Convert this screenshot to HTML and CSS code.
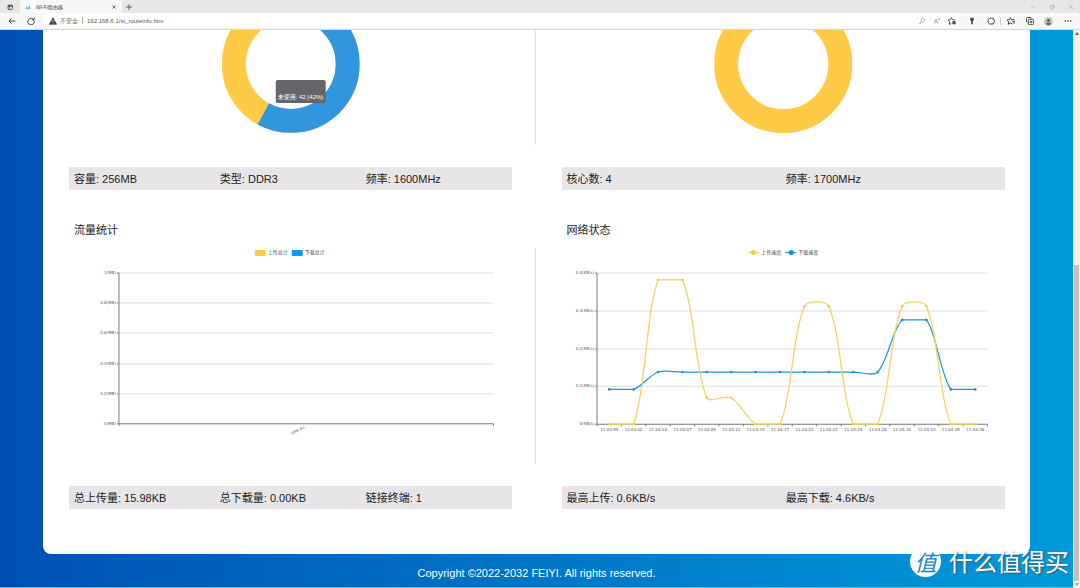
FILE: index.html
```html
<!DOCTYPE html>
<html lang="zh-CN">
<head>
<meta charset="utf-8">
<title>Wi-Fi路由器</title>
<link rel="stylesheet" href="styles.css">
</head>
<body>
<header class="browser">
  <div class="tabbar">
    <button class="tab-menu" aria-label="标签页操作"><svg class="icon" viewBox="0 0 12 12"><rect x="2" y="2" width="9" height="9" rx="1.5"/><path d="M2 3.500h9M2 5h9M4.500 5v6"/></svg></button>
    <div class="tab">
      <svg class="icon favicon" viewBox="0 0 12 12"><path d="M1 9.500h10M2 7.500h8M9 7V3M4 7V5.500"/></svg>
      <span class="tab-title">Wi-Fi路由器</span>
      <button class="tab-close" aria-label="关闭标签页"><svg class="icon" viewBox="0 0 12 12"><path d="M3 3l6 6M9 3l-6 6"/></svg></button>
    </div>
    <button class="tab-new" aria-label="新建标签页"><svg class="icon" viewBox="0 0 12 12"><path d="M6 0v12M0 6h12"/></svg></button>
    <div class="window-controls">
      <button class="window-button" aria-label="最小化"><svg class="icon" viewBox="0 0 12 12"><path d="M2 6h8"/></svg></button>
      <button class="window-button" aria-label="还原"><svg class="icon" viewBox="0 0 12 12"><rect x="2" y="4" width="6.500" height="6.500" rx="1"/><path d="M4 2h5q1.500 0 1.500 1.500V8"/></svg></button>
      <button class="window-button" aria-label="关闭"><svg class="icon" viewBox="0 0 12 12"><path d="M2 2l8 8M10 2l-8 8"/></svg></button>
    </div>
  </div>
  <div class="toolbar">
    <div class="nav">
      <button class="tool" aria-label="返回"><svg class="icon icon-large" viewBox="0 0 12 12"><path d="M11 6H1.500M5.500 2L1.500 6l4 4"/></svg></button>
      <button class="tool" aria-label="刷新"><svg class="icon icon-large" viewBox="0 0 12 12"><path d="M10.500 4.500A4.900 4.900 0 1 0 11 6M10.700 1v3.500H7.200"/></svg></button>
    </div>
    <div class="address">
      <svg class="icon icon-large warning" viewBox="0 0 12 12"><path d="M6 1L11.500 11H.5z"/><path class="warning-mark" d="M6 4.500v3M6 8.800v1"/></svg>
      <label class="security" for="url">不安全</label>
      <span class="separator"></span>
      <input class="url" id="url" type="text" value="192.168.6.1/st_routeinfo.htm">
      <button class="field-tool" aria-label="密码"><svg class="icon" viewBox="0 0 12 12"><circle cx="7.500" cy="4.500" r="3.500"/><path d="M5 7l-4 4h2.500"/></svg></button>
      <button class="field-tool" aria-label="朗读"><svg class="icon" viewBox="0 0 12 12"><path d="M0 11L4 2l4 9M1.500 8h5M8.500 1q1.500 1.500 0 3M10.500 0q2.500 2.500 0 5"/></svg></button>
      <button class="field-tool field-tool-strong" aria-label="添加收藏"><svg class="icon icon-large" viewBox="0 0 12 12"><path d="M5 10l-3 1 .5-4L0 4.500 3.500 4 5 1l1.700 3 3.800.5"/><circle class="solid" cx="9" cy="8.500" r="2.800"/></svg></button>
    </div>
    <div class="actions">
      <button class="tool" aria-label="密钥"><svg class="icon icon-large" viewBox="0 0 12 12"><path class="solid" d="M4 1h4l1 2-1 2.500H7.200V11H4.800V5.500H4L3 3z"/></svg></button>
      <button class="tool" aria-label="扩展"><svg class="icon icon-large" viewBox="0 0 12 12"><path d="M9.500 4V2H6.500A1.500 1.500 0 0 0 4 2.500Q1 3 1.500 6.500T4 10.500h5.500V8.500a2 2 0 1 0 0-4.500z"/></svg></button>
      <span class="separator"></span>
      <button class="tool" aria-label="收藏夹"><svg class="icon icon-large" viewBox="0 0 12 12"><path d="M8 10.500L5 9l-3 2 .5-4L0 4.500 3.500 4 5 1l1.700 3L11 4M8.500 6.500H12M9 9h3"/></svg></button>
      <button class="tool" aria-label="集锦"><svg class="icon icon-large" viewBox="0 0 12 12"><rect x="3.500" y="3.500" width="8" height="8" rx="1.500"/><path d="M2 8.500Q.7 8 .7 6V2Q.7.700 2 .7h4q2 0 2.500 1.300M7.500 5.500v4M5.500 7.500h4"/></svg></button>
      <button class="tool" aria-label="个人资料"><svg class="avatar" viewBox="0 0 12 12"><circle class="avatar-disc" cx="6" cy="6" r="6"/><circle class="avatar-person" cx="6" cy="4.500" r="2.200"/><path class="avatar-person" d="M2.500 7.500h7Q9 11 6 11T2.500 7.500z"/></svg></button>
      <button class="tool" aria-label="设置及其他"><svg class="icon icon-large" viewBox="0 0 12 12"><path class="solid" d="M1 5h2v2H1zM5 5h2v2H5zM9 5h2v2H9z"/></svg></button>
    </div>
  </div>
</header>

<div class="viewport">
  <div class="page">
    <main class="card">
      <section class="panel panel-divided">
        <div class="chart chart-donut">
          <svg class="plot" viewBox="0 0 443 115" role="img" aria-label="内存使用">
            <circle class="ring" cx="222" cy="34" r="57"/>
            <circle class="ring ring-blue" cx="222" cy="34" r="57" pathLength="100" stroke-dasharray="58 42" transform="rotate(-90 222 34)"/>
            <rect class="tip" x="207" y="50" width="50" height="23" rx="2"/>
            <text class="tip-text" x="209" y="69">未使用: 42 (42%)</text>
          </svg>
        </div>
        <ul class="facts"><li>容量: 256MB</li><li>类型: DDR3</li><li>频率: 1600MHz</li></ul>
      </section>
      <section class="panel">
        <div class="chart chart-donut">
          <svg class="plot" viewBox="0 0 443 115" role="img" aria-label="处理器使用">
            <circle class="ring" cx="221" cy="34" r="57"/>
          </svg>
        </div>
        <ul class="facts"><li>核心数: 4</li><li>频率: 1700MHz</li></ul>
      </section>
      <section class="panel panel-divided">
        <h2 class="heading">流量统计</h2>
        <div class="chart">
          <svg class="plot" id="traffic" viewBox="0 0 443 216" role="img" aria-label="流量统计">
            <rect class="bar-yellow" x="186" y="2" width="11" height="6" rx="1"/>
            <text class="legend" x="199" y="6">上传总计</text>
            <rect class="bar-blue" x="223" y="2" width="11" height="6" rx="1"/>
            <text class="legend" x="236" y="6">下载总计</text>
          </svg>
        </div>
        <ul class="facts"><li>总上传量: 15.98KB</li><li>总下载量: 0.00KB</li><li>链接终端: 1</li></ul>
      </section>
      <section class="panel">
        <h2 class="heading">网络状态</h2>
        <div class="chart">
          <svg class="plot" id="network" viewBox="0 0 443 216" role="img" aria-label="网络状态">
            <path class="line-up" d="M186 4.500h11"/><circle class="dot-up" cx="191" cy="4.500" r="2.500"/>
            <text class="legend" x="199" y="6">上传速度</text>
            <path class="line-down" d="M223 4.500h11"/><circle class="dot-down" cx="229" cy="4.500" r="2.500"/>
            <text class="legend" x="236" y="6">下载速度</text>
          </svg>
        </div>
        <ul class="facts"><li>最高上传: 0.6KB/s</li><li>最高下载: 4.6KB/s</li></ul>
      </section>
    </main>
    <footer class="footer">Copyright ©2022-2032 FEIYI. All rights reserved.</footer>
  </div>
  <div class="scrollbar" aria-hidden="true">
    <span class="arrow arrow-up"></span>
    <span class="thumb"></span>
    <span class="arrow arrow-down"></span>
  </div>
</div>

<div class="watermark">
  <span class="watermark-badge">值</span>
  <span class="watermark-name">什么值得买</span>
</div>
<script src="charts.js"></script>
</body>
</html>
```

FILE: styles.css
```css
* { box-sizing: border-box; }

body {
  margin: 0;
  min-height: 100vh;
  display: flex;
  flex-direction: column;
  position: relative;
  background: #fff;
  color: #1c1c1e;
  font-family: "Liberation Sans", "Noto Sans CJK SC", sans-serif;
  font-size: 11px;
  line-height: 16px;
}

button {
  display: flex;
  align-items: center;
  justify-content: center;
  margin: 0;
  padding: 0;
  border: 0;
  background: none;
  color: inherit;
}

/* Browser frame */
.browser {
  color: #444;
  font-size: 6px;
  line-height: 8px;
  border-bottom: 1px solid #d6d6d6;
}
.tabbar { display: flex; height: 13px; background: #e6e8e6; }
.tab-menu { width: 20px; }
.tab {
  display: flex;
  align-items: center;
  gap: 5px;
  width: 102px;
  padding: 0 4px 0 5px;
  background: #f8f8f8;
  border-radius: 3px 3px 0 0;
}
.tab-title { flex: 1; font-size: 5px; }
.tab-close { width: 8px; height: 8px; }
.tab-new { width: 13px; }
.window-controls { display: flex; margin-left: auto; color: #b4b4b4; }
.window-button { width: 19px; }
.toolbar { display: flex; height: 16px; padding-right: 3px; background: #f8f8f8; }
.nav { display: flex; width: 43px; padding-left: 2px; }
.tool { width: 19px; }
.address {
  flex: 1;
  display: flex;
  align-items: center;
  height: 15px;
  padding: 0 0 0 6px;
  background: #fff;
  border-radius: 4px;
}
.security { margin-left: 3px; color: #777; }
.separator { flex: none; width: 1px; height: 7px; margin: 0 4px; background: #aaa; }
.url {
  flex: 1;
  min-width: 0;
  margin: 0;
  padding: 0;
  border: 0;
  outline: 0;
  background: none;
  color: #555;
  font: inherit;
}
.field-tool { width: 15px; height: 14px; color: #999; }
.field-tool-strong { color: #555; }
.actions { display: flex; align-items: center; padding-left: 3px; }
.actions .separator { margin: 0; background: #ccc; }

.icon {
  flex: none;
  width: 6px;
  height: 6px;
  fill: none;
  stroke: currentColor;
  stroke-width: 1.5;
}
.icon-large { width: 8px; height: 8px; }
.favicon { stroke: #3f9fd8; }
.solid { fill: currentColor; stroke: none; }
.warning { fill: #444; stroke-width: 1; }
.warning-mark { stroke: #fff; }
.avatar { width: 9px; height: 9px; }
.avatar-disc { fill: #c8c8c8; }
.avatar-person { fill: #666; }

/* Router page */
.viewport { flex: 1; display: flex; }
.page {
  flex: 1;
  display: flex;
  flex-direction: column;
  padding: 0 43px;
  background: linear-gradient(90deg, #0050b3, #009adb);
  border-bottom: 1px solid #6db2e0;
}
.card {
  display: grid;
  grid-template-columns: 1fr 1fr;
  row-gap: 32px;
  padding-bottom: 45px;
  background: #fff;
  border-radius: 0 0 8px 8px;
}
.panel { min-width: 0; padding: 0 25px; }
.panel-divided { padding-left: 26px; }
.panel-divided .chart {
  margin-right: -24px;
  padding-right: 23px;
  border-right: 1px solid #e2e2e4;
}
.chart { margin-top: 10px; margin-bottom: 22px; }
.chart-donut { margin-top: 0; }
.heading { margin: 0; padding-left: 5px; font-size: 11px; font-weight: 400; }
.facts {
  display: flex;
  margin: 0;
  padding: 4px 0 3px 5px;
  background: #e7e5e8;
  list-style: none;
}
.facts li { flex: 1; }
.footer { padding: 11px 0 6px; color: #fff; text-align: center; }

/* Charts */
.plot { display: block; width: 100%; height: auto; }
.bar-yellow { fill: #ffcb46; }
.bar-blue { fill: #0d96f2; }
.ring { fill: none; stroke: #ffcb46; stroke-width: 24; }
.ring-blue { stroke: #3196dd; }
.tip { fill: #67656a; }
.tip-text { fill: #fff; font-size: 6px; }
.legend { fill: #444; font-size: 5px; }
.grid-line { fill: none; stroke: #dedde3; }
.axis { fill: none; stroke: #77787c; }
.tick-label {
  fill: #555;
  font-family: "DejaVu Sans", sans-serif;
  font-size: 4px;
}
.label-end { text-anchor: end; }
.label-middle { text-anchor: middle; }
.line-up { fill: none; stroke: #f2d35f; stroke-width: 1.3; }
.line-down { fill: none; stroke: #1d95d8; stroke-width: 1.2; }
.dot-up { fill: #f5cb45; }
.dot-down { fill: #1590da; }

/* Scrollbar */
.scrollbar {
  display: flex;
  flex-direction: column;
  align-items: center;
  width: 7px;
  padding: 2px 0;
  background: #f2f2f2;
}
.arrow { border: 2px solid transparent; }
.arrow-up { border-top: 0; border-bottom: 3px solid #666; }
.arrow-down { border-bottom: 0; border-top: 3px solid #999; }
.thumb { width: 5px; height: 57%; margin: auto 0 2px; background: #c1c1c1; }

/* Watermark */
.watermark {
  position: absolute;
  right: 11px;
  bottom: 10px;
  display: flex;
  align-items: center;
  gap: 8px;
  color: #fff;
  font-family: "Noto Sans CJK SC", sans-serif;
  font-size: 24px;
  font-weight: 400;
  line-height: 34px;
}
.watermark-badge {
  width: 31px;
  height: 31px;
  border-radius: 50%;
  background: #fff;
  color: #1486c8;
  font-size: 22px;
  font-style: italic;
  line-height: 30px;
  text-align: center;
}
.watermark-name { text-shadow: 1px 1px 2px #456; }
```

FILE: charts.js
```javascript
const SVG = "http://www.w3.org/2000/svg";
const TOP = 25;
const BOTTOM = 176;
const RIGHT = 425;

function add(svg, tag, attrs, text) {
  const node = document.createElementNS(SVG, tag);
  for (const key in attrs) node.setAttribute(key, attrs[key]);
  if (text) node.textContent = text;
  svg.appendChild(node);
}

function drawAxes(svg, left, labels, columns) {
  const step = (BOTTOM - TOP) / (labels.length - 1);
  labels.forEach((label, i) => {
    const y = Math.round(TOP + step * i);
    if (i < labels.length - 1) add(svg, "path", { class: "grid-line", d: `M${left} ${y}H${RIGHT}` });
    add(svg, "path", { class: "axis", d: `M${left - 2} ${y}h2` });
    add(svg, "text", { class: "tick-label label-end", x: left - 3, y: y + 1 }, label);
  });
  add(svg, "path", { class: "axis", d: `M${left} ${TOP}V${BOTTOM}H${RIGHT}` });
  for (let i = 0; i <= columns; i++) {
    add(svg, "path", { class: "axis", d: `M${left + (RIGHT - left) * i / columns} ${BOTTOM}v2` });
  }
}

// Smooth curve whose control points stay inside the range of the series.
function smoothPath(points) {
  const ys = points.map(p => p[1]);
  const low = Math.min(...ys);
  const high = Math.max(...ys);
  const clamp = y => Math.max(low, Math.min(high, y));
  const controls = points.map((p, i) => {
    const a = points[i - 1];
    const b = points[i + 1];
    if (!a || !b) return [p, p];
    const da = Math.hypot(p[0] - a[0], p[1] - a[1]);
    const db = Math.hypot(p[0] - b[0], p[1] - b[1]);
    const vx = (b[0] - a[0]) * 0.3;
    const vy = (b[1] - a[1]) * 0.3;
    const s = da / (da + db);
    return [
      [p[0] - vx * s, clamp(p[1] - vy * s)],
      [p[0] + vx * (1 - s), clamp(p[1] + vy * (1 - s))]
    ];
  });
  let d = `M${points[0]}`;
  for (let i = 1; i < points.length; i++) d += `C${controls[i - 1][1]} ${controls[i][0]} ${points[i]}`;
  return d;
}

const traffic = document.getElementById("traffic");
drawAxes(traffic, 50, ["1(MB)", "0.8(MB)", "0.6(MB)", "0.4(MB)", "0.2(MB)", "0(MB)"], 1);
add(traffic, "text", { class: "tick-label label-middle", x: 230, y: 184, transform: "rotate(-25 230 184)" }, "XMF-PC");

const network = document.getElementById("network");
const start = 35;
const times = ["11:03:59", "11:04:02", "11:04:04", "11:04:07", "11:04:09", "11:04:12", "11:04:14", "11:04:17",
  "11:04:20", "11:04:22", "11:04:25", "11:04:28", "11:04:30", "11:04:33", "11:04:35", "11:04:38"];
const up = [0, 0, 0.382, 0.382, 0.07, 0.07, 0, 0, 0.312, 0.312, 0, 0, 0.312, 0.312, 0, 0];
const down = [0.092, 0.092, 0.138, 0.138, 0.138, 0.138, 0.138, 0.138, 0.138, 0.138, 0.138, 0.138, 0.276, 0.276, 0.092, 0.092];
const column = (RIGHT - start) / times.length;
const centre = i => start + column * (i + 0.5);

drawAxes(network, start, ["0.4(KB/s)", "0.3(KB/s)", "0.2(KB/s)", "0.1(KB/s)", "0(KB/s)"], times.length);
times.forEach((time, i) => add(network, "text", { class: "tick-label label-middle", x: centre(i), y: 183 }, time));

[[down, "down"], [up, "up"]].forEach(([values, name]) => {
  const points = values.map((v, i) => [centre(i), BOTTOM - v / 0.4 * (BOTTOM - TOP)]);
  add(network, "path", { class: `line-${name}`, d: smoothPath(points) });
  points.forEach(([x, y]) => add(network, "circle", { class: `dot-${name}`, cx: x, cy: y, r: 1.3 }));
});
```
